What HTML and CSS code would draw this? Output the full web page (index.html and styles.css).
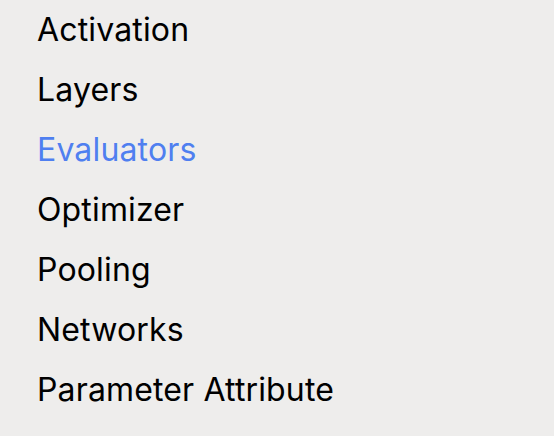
FILE: index.html
```html
<!DOCTYPE html>
<html lang="en">
<head>
    <meta charset="UTF-8">
    <meta name="viewport" content="width=device-width, initial-scale=1.0">
    <title>Categories</title>
    <link rel="stylesheet" href="styles.css">
</head>
<body>
    <ul class="menu">
        <li class="menu-item">Activation</li>
        <li class="menu-item">Layers</li>
        <li class="menu-item active">Evaluators</li>
        <li class="menu-item">Optimizer</li>
        <li class="menu-item">Pooling</li>
        <li class="menu-item">Networks</li>
        <li class="menu-item">Parameter Attribute</li>
    </ul>
</body>
</html>
```

FILE: styles.css
```css
body {
    font-family: Inter, "Noto Sans", sans-serif;
    background-color: #eeedec;
    margin: 0;
    padding: 0;
}

.menu {
    list-style: none;
    margin: 0;
    padding: 0 0 0 37px;
}

.menu-item {
    font-size: 32px;
    line-height: 60px;
    letter-spacing: 0.15px;
    color: #000;
}

.menu-item.active {
    color: #4f7ff0;
}
```
